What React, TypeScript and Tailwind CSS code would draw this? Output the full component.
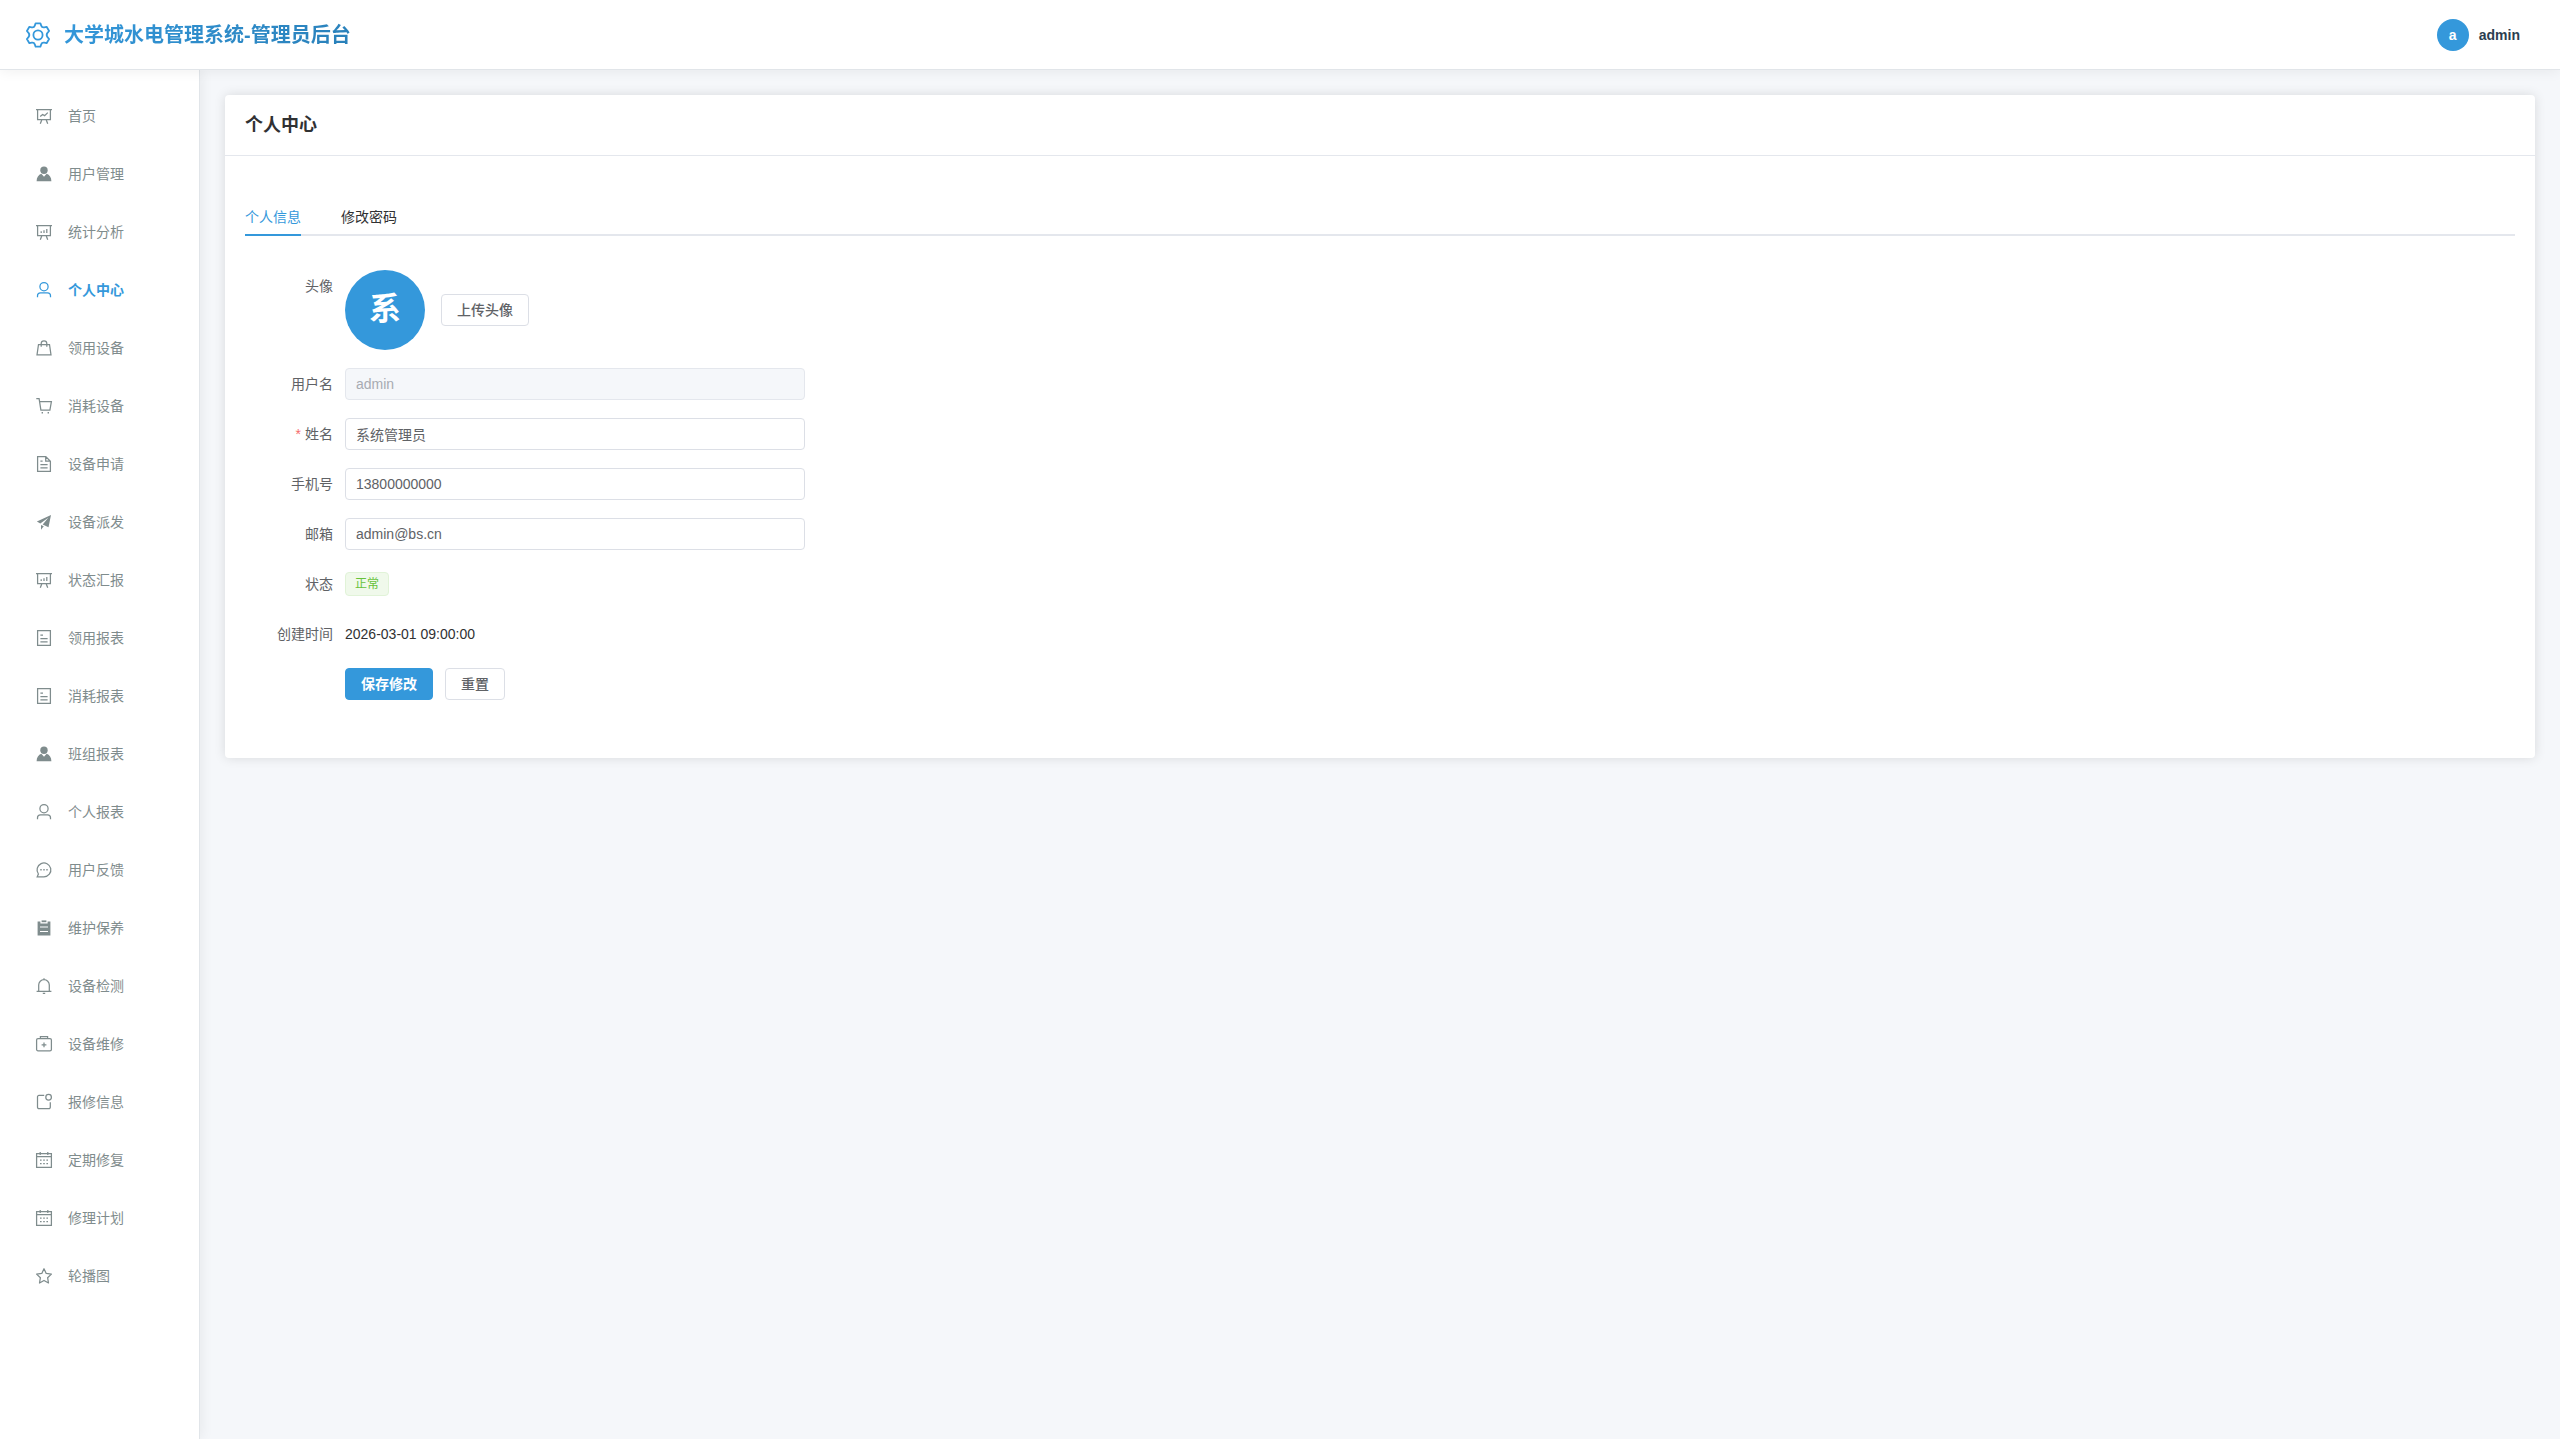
import { useState } from "react";
import type { ReactNode } from "react";
import clsx from "clsx";

type IconName =
  | "dataLine"
  | "userSolid"
  | "dataAnalysis"
  | "user"
  | "goods"
  | "cart"
  | "document"
  | "promotion"
  | "tickets"
  | "chat"
  | "order"
  | "bell"
  | "aidKit"
  | "notice"
  | "date"
  | "star";

const NAV_ITEMS: { label: string; icon: IconName }[] = [
  { label: "首页", icon: "dataLine" },
  { label: "用户管理", icon: "userSolid" },
  { label: "统计分析", icon: "dataAnalysis" },
  { label: "个人中心", icon: "user" },
  { label: "领用设备", icon: "goods" },
  { label: "消耗设备", icon: "cart" },
  { label: "设备申请", icon: "document" },
  { label: "设备派发", icon: "promotion" },
  { label: "状态汇报", icon: "dataAnalysis" },
  { label: "领用报表", icon: "tickets" },
  { label: "消耗报表", icon: "tickets" },
  { label: "班组报表", icon: "userSolid" },
  { label: "个人报表", icon: "user" },
  { label: "用户反馈", icon: "chat" },
  { label: "维护保养", icon: "order" },
  { label: "设备检测", icon: "bell" },
  { label: "设备维修", icon: "aidKit" },
  { label: "报修信息", icon: "notice" },
  { label: "定期修复", icon: "date" },
  { label: "修理计划", icon: "date" },
  { label: "轮播图", icon: "star" },
];

const board = <path d="M0 1.5h16M1.6 1.5v10h12.8v-10M5.8 11.8l-1.5 3.9M10.2 11.8l1.5 3.9" />;

const ICONS: Record<IconName, ReactNode> = {
  dataLine: (
    <>
      {board}
      <path d="M4.2 8.4l2.4-2 2 1.2 3.2-3" />
    </>
  ),
  dataAnalysis: (
    <>
      {board}
      <path d="M5.2 7.3v1.7M8 6.2V9M10.8 5v4" />
    </>
  ),
  userSolid: (
    <g fill="currentColor" stroke="none">
      <circle cx="8" cy="4.3" r="3.7" />
      <path d="M.6 15.2c0-3.8 1.9-6.3 4.7-7.4L8 10.8l2.7-3c2.8 1.1 4.7 3.6 4.7 7.4z" />
    </g>
  ),
  user: (
    <>
      <circle cx="8" cy="4.7" r="4.1" />
      <path d="M1.5 15.2v-1.4c0-1.8 1.2-3 3-3h7c1.8 0 3 1.2 3 3v1.4" />
    </>
  ),
  goods: <path d="M2.5 4.5h11l1.5 10.3H1zM5.2 6.8V3.6a2.8 2.8 0 0 1 5.6 0v3.2" />,
  cart: (
    <>
      <path d="M.3.7h2.8l1.8 11.4h9l1.5-8.6H3.6" />
      <path d="M5.6 14.7h1.4M11.6 14.7H13" strokeWidth="1.4" />
    </>
  ),
  document: <path d="M1.6.6h8.2l4.6 4.6v10.2H1.6zM9.7.6v4.6h4.7M4.4 5.2h2.2M4.4 8.5h7.2M4.4 11.8h7.2" />,
  promotion: (
    <g fill="currentColor" stroke="none">
      <path d="M15 1.1.9 7.4l3.4 2 8-5.7-5.6 6.9 5.8 2.6z" />
      <path d="M5 11v4.8l2.8-3.5z" />
    </g>
  ),
  tickets: <path d="M1.6.6h12.8v14.8H1.6zM4.4 5.2h2.6M4.4 8.5h7.2M4.4 11.8h7.2" />,
  chat: (
    <>
      <path d="M1.2 14.8H8A6.9 6.9 0 1 0 2.4 12z" />
      <path d="M4.3 7.7h1.4M7.3 7.7h1.4M10.3 7.7h1.4" strokeWidth="1.4" />
    </>
  ),
  order: (
    <g fill="currentColor" stroke="none">
      <path d="M5.6.4h4.8v1.8H5.6z" />
      <path fillRule="evenodd" d="M1.6 1.6h2.8v1.8h7.2V1.6h2.8v13.8H1.6zM4 6.4v1.2h8V6.4zM4 10.9v1.2h8v-1.2z" />
    </g>
  ),
  bell: <path d="M.6 13.3h14.8M2.7 13.3V7a5.3 5.3 0 0 1 10.6 0v6.3M8 1.6V.2M6.8 15.4h2.4" />,
  aidKit: (
    <>
      <rect x=".6" y="2.6" width="14.8" height="12.2" rx="1.4" />
      <path d="M4.4 2.6V.6h7.2v2M8 6.4v4.8M5.6 8.8h4.8" />
    </>
  ),
  notice: (
    <>
      <path d="M8.2 1.4H3A1.5 1.5 0 0 0 1.5 3v10.2a1.5 1.5 0 0 0 1.5 1.5h9.8a1.5 1.5 0 0 0 1.5-1.5V8.3" />
      <circle cx="12.6" cy="3.2" r="2.8" />
    </>
  ),
  date: (
    <>
      <path d="M.6 1.7h14.8v13.6H.6zM.6 4.6h14.8M4.2 0v3M11.8 0v3" />
      <path d="M4 8.2h1.6M7.2 8.2h1.6M10.4 8.2H12M4 11.6h1.6M7.2 11.6h1.6M10.4 11.6H12" />
    </>
  ),
  star: <path d="M8 .7l2.2 4.7 5.2.7-3.8 3.6.9 5.3L8 12.5 3.5 15l.9-5.3L.6 6.1l5.2-.7z" strokeLinejoin="round" />,
};

function Icon({ name }: { name: IconName }) {
  return (
    <svg viewBox="0 0 16 16" className="mx-1 size-4 shrink-0 overflow-visible" fill="none" stroke="currentColor" strokeWidth="1.25" aria-hidden="true">
      {ICONS[name]}
    </svg>
  );
}

function GearIcon() {
  return (
    <svg viewBox="0 0 28 28" className="size-7 text-[#3498db]" fill="none" stroke="currentColor" strokeWidth="1.8" strokeLinejoin="round" aria-hidden="true">
      <path d="M11.6 2.3h4.8l.8 2.3c.5 1.4 1.6 2 3 1.7l2.4-.5 2.5 4.2-1.6 1.8c-.9 1.2-.9 3.2 0 4.4l1.6 1.8-2.5 4.2-2.4-.5c-1.4-.3-2.5.3-3 1.7l-.8 2.3h-4.8l-.8-2.3c-.5-1.4-1.6-2-3-1.7l-2.4.5L2.9 18l1.6-1.8c.9-1.2.9-3.2 0-4.4L2.9 10l2.5-4.2 2.4.5c1.4.3 2.5-.3 3-1.7z" />
      <circle cx="14" cy="14" r="4.6" />
    </svg>
  );
}

function FormItem({ label, htmlFor, required, children }: { label?: string; htmlFor?: string; required?: boolean; children: ReactNode }) {
  return (
    <div className="mb-[18px] flex">
      <label htmlFor={htmlFor} className="h-8 w-[100px] shrink-0 pr-3 text-right leading-8 text-[#606266]">
        {required && <span className="mr-1 text-[#f56c6c]">*</span>}
        {label}
      </label>
      <div className="flex min-h-8 flex-1 items-center text-[#303133]">{children}</div>
    </div>
  );
}

const INPUT =
  "h-8 w-full rounded border border-[#dcdfe6] bg-white px-[10px] text-[#606266] outline-none focus:border-[#3498db] disabled:border-[#e4e7ed] disabled:bg-[#f5f7fa] disabled:text-[#a8abb2]";
const BUTTON = "h-8 rounded border px-[15px]";
const BUTTON_PLAIN = "border-[#dcdfe6] bg-white font-medium text-[#606266]";

const TABS = ["个人信息", "修改密码"];

export default function App() {
  const [tab, setTab] = useState(TABS[0]);
  const [active, setActive] = useState("个人中心");

  return (
    <div className="flex min-h-screen flex-col bg-[#f5f7fa] font-['Liberation_Sans','Noto_Sans_CJK_SC',sans-serif] text-sm">
      <header className="relative z-10 flex h-[70px] items-center justify-between border-b border-[#e1e5e9] bg-white pl-6 pr-10 shadow-[0_2px_12px_rgba(0,0,0,0.06)]">
        <div className="flex items-center gap-3">
          <GearIcon />
          <h1 className="bg-linear-135 from-[#3498db] to-[#2980b9] bg-clip-text text-xl font-bold text-transparent">
            大学城水电管理系统-管理员后台
          </h1>
        </div>
        <button type="button" className="flex items-center gap-[10px] font-bold text-[#2c3e50]">
          <span className="flex size-8 items-center justify-center rounded-full bg-[#3498db] text-white">a</span>
          admin
        </button>
      </header>

      <div className="flex flex-1">
        <aside className="w-[200px] shrink-0 border-r border-[#e1e5e9] bg-white shadow-[2px_0_12px_rgba(0,0,0,0.06)]">
          <nav className="flex flex-col gap-[6px] py-5">
            {NAV_ITEMS.map((item) => (
              <a
                key={item.label}
                href="#"
                onClick={() => setActive(item.label)}
                className={clsx(
                  "flex h-[52px] items-center gap-3 pl-8",
                  active === item.label ? "font-bold text-[#3498db]" : "text-[#7f8c8d]"
                )}
              >
                <Icon name={item.icon} />
                {item.label}
              </a>
            ))}
          </nav>
        </aside>

        <main className="min-w-0 flex-1 p-[25px]">
          <section className="rounded bg-white shadow-[0_0_12px_rgba(0,0,0,0.12)]">
            <div className="flex h-[61px] items-center border-b border-[#e4e7ed] px-5">
              <h2 className="text-lg font-bold text-[#303133]">个人中心</h2>
            </div>

            <div className="px-5 pb-10 pt-10">
              <div role="tablist" className="flex h-10 gap-10 border-b-2 border-[#e4e7ed]">
                {TABS.map((name) => (
                  <button
                    key={name}
                    type="button"
                    role="tab"
                    aria-selected={tab === name}
                    onClick={() => setTab(name)}
                    className={clsx(
                      "-mb-[2px] h-10 border-b-2 pt-1",
                      tab === name ? "border-[#3498db] text-[#3498db]" : "border-transparent text-[#303133]"
                    )}
                  >
                    {name}
                  </button>
                ))}
              </div>

              <form className="max-w-[560px] pt-[34px]" onSubmit={(e) => e.preventDefault()}>
                <FormItem label="头像" htmlFor="avatar">
                  <span className="flex size-20 items-center justify-center rounded-full bg-[#3498db] text-[32px] font-bold text-white">系</span>
                  <button id="avatar" type="button" className={clsx(BUTTON, BUTTON_PLAIN, "ml-4")}>
                    上传头像
                  </button>
                </FormItem>
                <FormItem label="用户名" htmlFor="username">
                  <input id="username" className={INPUT} defaultValue="admin" disabled />
                </FormItem>
                <FormItem label="姓名" htmlFor="realname" required>
                  <input id="realname" className={INPUT} defaultValue="系统管理员" />
                </FormItem>
                <FormItem label="手机号" htmlFor="phone">
                  <input id="phone" type="tel" className={INPUT} defaultValue="13800000000" />
                </FormItem>
                <FormItem label="邮箱" htmlFor="email">
                  <input id="email" type="email" className={INPUT} defaultValue="admin@bs.cn" />
                </FormItem>
                <FormItem label="状态">
                  <span className="flex h-6 items-center rounded border border-[#e1f3d8] bg-[#f0f9eb] px-[9px] text-xs text-[#67c23a]">正常</span>
                </FormItem>
                <FormItem label="创建时间">2026-03-01 09:00:00</FormItem>
                <FormItem>
                  <button type="submit" className={clsx(BUTTON, "border-[#3498db] bg-[#3498db] font-bold text-white")}>
                    保存修改
                  </button>
                  <button type="reset" className={clsx(BUTTON, BUTTON_PLAIN, "ml-3")}>
                    重置
                  </button>
                </FormItem>
              </form>
            </div>
          </section>
        </main>
      </div>
    </div>
  );
}
